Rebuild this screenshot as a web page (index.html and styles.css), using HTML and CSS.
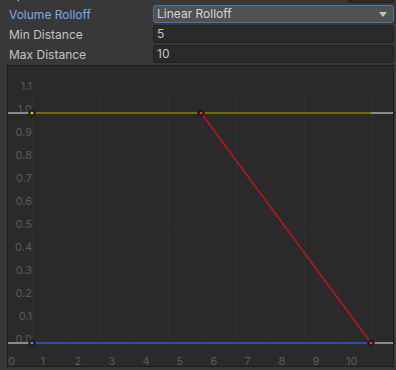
FILE: index.html
```html
<!DOCTYPE html>
<html lang="en">

<head>
    <meta charset="UTF-8">
    <title>Audio Source</title>
    <link rel="stylesheet" href="styles.css">
</head>

<body>

    <section class="panel">

        <div class="row cut">
            <span class="label">Spread</span>
            <span class="slider"></span>
            <span class="field small">0</span>
        </div>

        <div class="row">
            <span class="label active">Volume Rolloff</span>
            <span class="field dropdown">Linear Rolloff<i class="arrow"></i></span>
        </div>

        <div class="row">
            <span class="label">Min Distance</span>
            <span class="field">5</span>
        </div>

        <div class="row">
            <span class="label">Max Distance</span>
            <span class="field">10</span>
        </div>

        <div class="graph">
            <svg class="curve" width="385" height="300" viewBox="8 66 385 300">
                <!-- grid -->
                <g stroke="#303030" stroke-width="1">
                    <line x1="32.5" y1="90" x2="32.5" y2="343" />
                    <line x1="66.5" y1="90" x2="66.5" y2="343" />
                    <line x1="100.5" y1="90" x2="100.5" y2="343" />
                    <line x1="134.5" y1="90" x2="134.5" y2="343" />
                    <line x1="168.5" y1="90" x2="168.5" y2="343" />
                    <line x1="202.5" y1="90" x2="202.5" y2="343" />
                    <line x1="236.5" y1="90" x2="236.5" y2="343" />
                    <line x1="270.5" y1="90" x2="270.5" y2="343" />
                    <line x1="304.5" y1="90" x2="304.5" y2="343" />
                    <line x1="338.5" y1="90" x2="338.5" y2="343" />
                    <line x1="371.5" y1="90" x2="371.5" y2="343" />
                    <line x1="32" y1="89.5" x2="372" y2="89.5" />
                    <line x1="32" y1="228.5" x2="372" y2="228.5" />
                </g>

                <!-- y axis -->
                <g class="tick" text-anchor="end">
                    <text x="32" y="90">1.1</text>
                    <text x="32" y="113">1.0</text>
                    <text x="32" y="136">0.9</text>
                    <text x="32" y="159">0.8</text>
                    <text x="32" y="182">0.7</text>
                    <text x="32" y="205">0.6</text>
                    <text x="32" y="228">0.5</text>
                    <text x="32" y="251">0.4</text>
                    <text x="32" y="274">0.3</text>
                    <text x="32" y="297">0.2</text>
                    <text x="32" y="320">0.1</text>
                    <text x="32" y="343">0.0</text>
                </g>

                <!-- x axis -->
                <g class="tick">
                    <text x="8" y="365">0</text>
                    <text x="40.5" y="365">1</text>
                    <text x="74.5" y="365">2</text>
                    <text x="108.5" y="365">3</text>
                    <text x="142.5" y="365">4</text>
                    <text x="176.5" y="365">5</text>
                    <text x="210.5" y="365">6</text>
                    <text x="244.5" y="365">7</text>
                    <text x="278.5" y="365">8</text>
                    <text x="312.5" y="365">9</text>
                    <text x="346" y="365">10</text>
                </g>

                <!-- outside range -->
                <g stroke="#8a8a8a" stroke-width="2">
                    <line x1="8" y1="113" x2="32" y2="113" />
                    <line x1="371" y1="113" x2="393" y2="113" />
                    <line x1="8" y1="343" x2="32" y2="343" />
                    <line x1="371" y1="343" x2="393" y2="343" />
                </g>

                <line x1="32" y1="113" x2="371" y2="113" stroke="#6f6b12" stroke-width="2" />
                <line x1="32" y1="343" x2="371" y2="343" stroke="#1f4ec8" stroke-width="2" />
                <line x1="201" y1="113" x2="371" y2="343" stroke="#b81616" stroke-width="1.6" />

                <!-- keys -->
                <polygon points="32,109 36,113 32,117 28,113" fill="#111" />
                <circle cx="32" cy="113" r="1.6" fill="#c8c020" />
                <polygon points="201,109 205,113 201,117 197,113" fill="#111" />
                <circle cx="201" cy="113" r="1.6" fill="#e03a2a" />
                <polygon points="32,339 36,343 32,347 28,343" fill="#111" />
                <circle cx="32" cy="343" r="1.6" fill="#4a8ae8" />
                <polygon points="371,339 375,343 371,347 367,343" fill="#111" />
                <circle cx="371" cy="343" r="1.6" fill="#e03a2a" />
            </svg>
        </div>

    </section>

</body>

</html>
```

FILE: styles.css
```css
body {
    background-color: #383838;
    margin: 0;
    font-family: Inter, "Noto Sans", sans-serif;
    font-size: 12px;
    color: #c4c4c4;
    overflow: hidden;
}

.panel {
    display: flow-root;
}

.row {
    display: flex;
    align-items: center;
    height: 18px;
    margin-top: 2px;
    padding: 0 2px 0 9px;
}

/* row above, only its bottom edge shows */
.row.cut {
    margin-top: -15px;
}

.label {
    width: 144px;
    flex: none;
}

.label.active {
    color: #7ba9ec;
}

.field {
    flex: 1;
    position: relative;
    height: 18px;
    box-sizing: border-box;
    line-height: 16px;
    padding-left: 3px;
    background-color: #2a2a2a;
    border: 1px solid #212121;
    border-radius: 3px;
}

.slider {
    flex: 1;
}

.field.small {
    flex: none;
    width: 46px;
    margin-left: 5px;
}

.dropdown {
    background-color: #515151;
    border-color: #3a79bb;
    color: #d4d4d4;
}

.arrow {
    position: absolute;
    right: 6px;
    top: 6px;
    border-left: 4px solid transparent;
    border-right: 4px solid transparent;
    border-top: 5px solid #c4c4c4;
}

.graph {
    margin: 2px 2px 0 7px;
    height: 302px;
    box-sizing: border-box;
    border: 1px solid #1c1c1c;
    background-color: #2a2a2a;
}

.curve {
    display: block;
}

.tick {
    font-family: Inter, "Noto Sans", sans-serif;
    font-size: 11px;
    fill: #5a5a5a;
}
```
